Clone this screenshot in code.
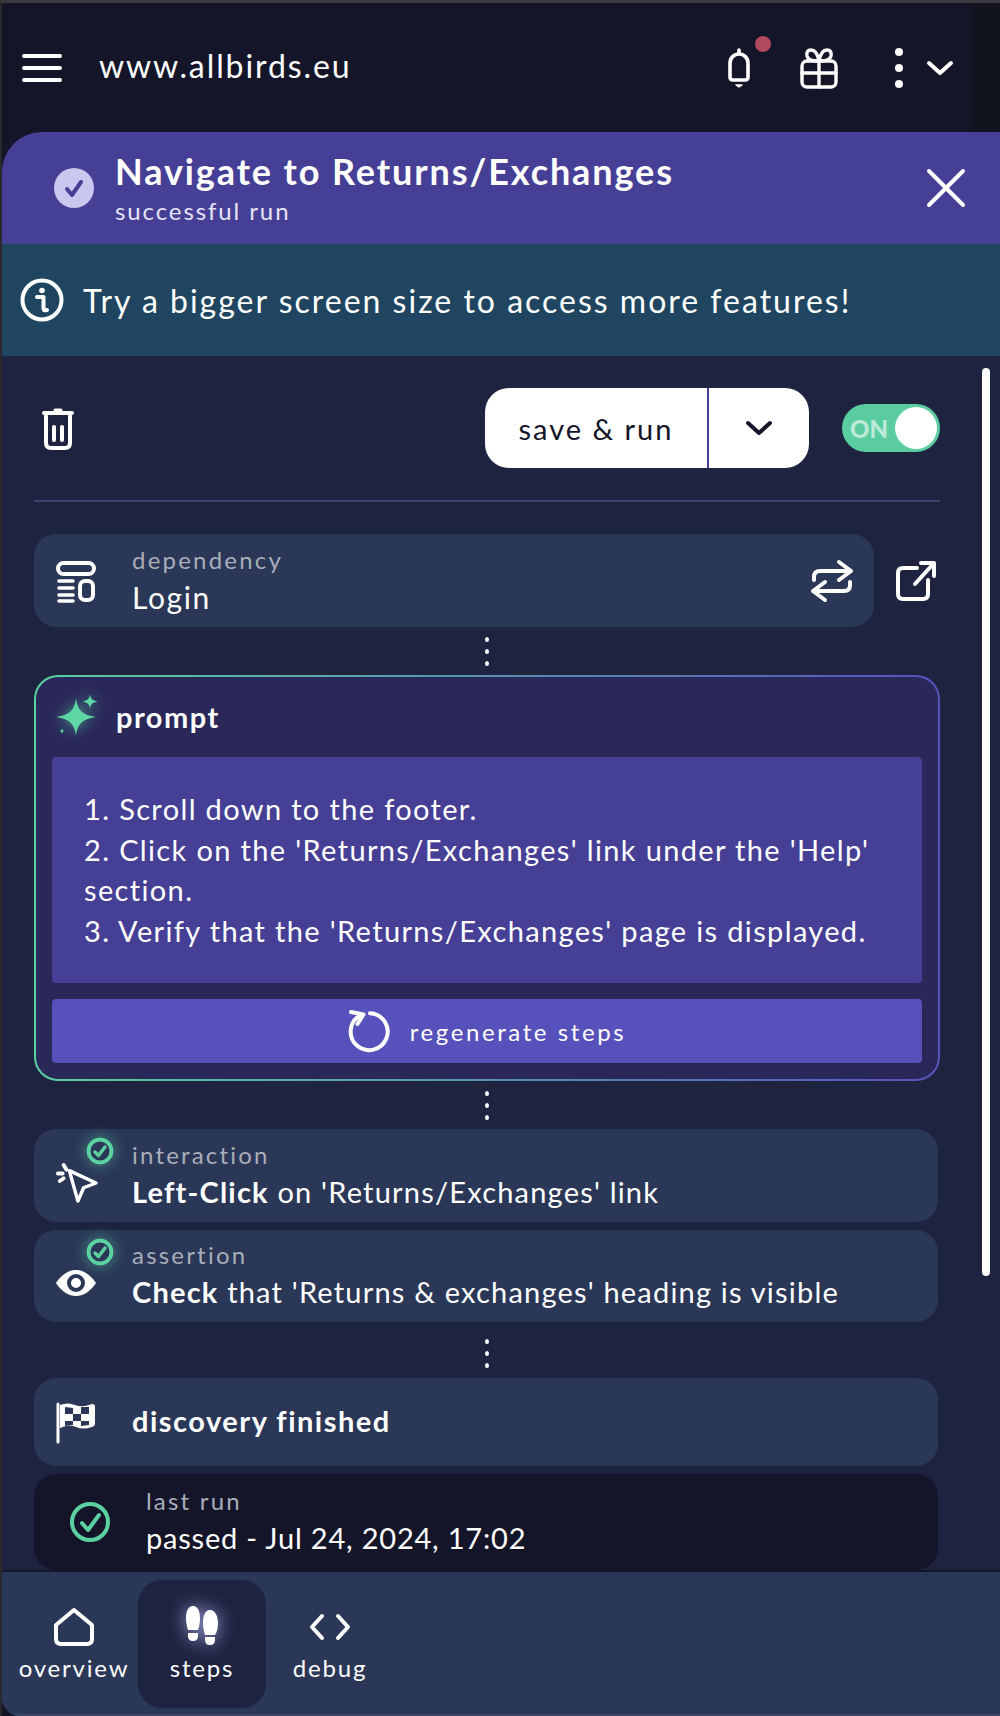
<script>
  const ico = { fill: 'none', stroke: '#fff', 'stroke-width': 4, 'stroke-linecap': 'round', 'stroke-linejoin': 'round' };
</script>

<div class="frame">
  <header class="top">
    <svg class="burger" width="40" height="30" viewBox="0 0 40 30" {...ico}><path d="M2 3h36M2 15h36M2 27h36"/></svg>
    <span class="url">www.allbirds.eu</span>
    <div class="top-icons">
      <div class="bell">
        <svg width="30" height="44" viewBox="0 0 30 44" {...ico} stroke-width="3.6"><path d="M15 4v3M6 31V17a9 9 0 0 1 18 0v14q0 3-3 3H9q-3 0-3-3z"/><path d="M12 39h6l-3 2z" fill="#fff" stroke-width="1.5"/></svg>
        <span class="notif"></span>
      </div>
      <svg class="gift" width="38" height="42" viewBox="0 0 38 42" {...ico} stroke-width="3.4"><path d="M19 14q-2-11-8-11-5 0-4 6 1 5 12 5 11 0 12-5 1-6-4-6-6 0-8 11z"/><rect x="2" y="14" width="34" height="26" rx="5"/><path d="M19 14v26M2 26h34"/></svg>
      <div class="kebab"><i></i><i></i><i></i></div>
      <svg width="26" height="16" viewBox="0 0 26 16" {...ico}><path d="M2 3l11 10L24 3"/></svg>
    </div>
  </header>

  <div class="panel">
    <section class="title">
      <svg width="40" height="40" viewBox="0 0 40 40"><circle cx="20" cy="20" r="20" fill="#c9c7f0"/><path d="M13 21l5 6 9-13" fill="none" stroke="#463f96" stroke-width="4" stroke-linecap="round" stroke-linejoin="round"/></svg>
      <div class="title-text">
        <h1>Navigate to Returns/Exchanges</h1>
        <p>successful run</p>
      </div>
      <svg class="close" width="40" height="38" viewBox="0 0 40 38" {...ico}><path d="M3 2l34 34M37 2L3 36"/></svg>
    </section>

    <section class="info">
      <svg width="44" height="44" viewBox="0 0 44 44"><circle cx="22" cy="22" r="19.5" fill="none" stroke="#fff" stroke-width="4"/><circle cx="22" cy="12.5" r="2.8" fill="#fff"/><path d="M17 19h6.5v11.5q0 2.500 3.500 1.500" fill="none" stroke="#fff" stroke-width="4" stroke-linecap="round" stroke-linejoin="round"/></svg>
      <span>Try a bigger screen size to access more features!</span>
    </section>

    <main class="body">
      <div class="scrollbar"></div>
      <div class="actions">
        <svg width="32" height="42" viewBox="0 0 32 42" {...ico}><path d="M2 5h28"/><path d="M13 2h6" stroke-width="3"/><path d="M4 8v27q0 5 5 5h14q5 0 5-5V8"/><path d="M12 19v13M20 19v13"/></svg>
        <div class="split">
          <span class="save">save &amp; run</span>
          <span class="caret"><svg width="26" height="16" viewBox="0 0 26 16" fill="none" stroke="#141529" stroke-width="4" stroke-linecap="round" stroke-linejoin="round"><path d="M2 3l11 10L24 3"/></svg></span>
        </div>
        <div class="toggle"><b>ON</b><i></i></div>
      </div>
      <hr />

      <div class="dep-row">
        <div class="card dep">
          <svg class="ci" width="40" height="42" viewBox="0 0 40 42" {...ico}><rect x="2" y="3" width="36" height="11" rx="5.500"/><path d="M3 21h14M3 28h14M3 35h14M3 41h14" stroke-width="3.600"/><rect x="24" y="21" width="13" height="19" rx="5"/></svg>
          <div class="ct"><small>dependency</small><span class="login">Login</span></div>
          <svg class="swap" width="42" height="42" viewBox="0 0 42 42" {...ico}><path d="M28 2l12 9-12 9M40 11H9q-6 0-6 6v3M14 22L2 31l12 9M2 31h31q6 0 6-6v-3"/></svg>
        </div>
        <svg class="ext" width="42" height="42" viewBox="0 0 42 42" {...ico}><path d="M22 8H8q-5 0-5 5v21q0 5 5 5h20q5 0 5-5V20M20 24L39 3M26 3h13v13"/></svg>
      </div>

      <div class="dots"><i></i><i></i><i></i></div>

      <section class="prompt">
        <div class="p-head">
          <svg class="spark" width="46" height="46" viewBox="0 0 46 46" fill="#5fd6a6"><path d="M22 4c1.500 12 6 17 20 19-14 2-18.500 7-20 19-1.500-12-6-17-20-19 14-2 18.500-7 20-19z"/><path d="M36 0c.7 5 2.500 6.500 7.500 7.500-5 1-6.800 2.500-7.500 7.500-.7-5-2.500-6.500-7.500-7.500C33.500 6.500 35.300 5 36 0z"/><path d="M8 34c.3 2 1 2.700 3 3-2 .3-2.700 1-3 3-.3-2-1-2.700-3-3 2-.3 2.700-1 3-3z"/></svg>
          <b>prompt</b>
        </div>
        <div class="p-body">1. Scroll down to the footer.<br />2. Click on the 'Returns/Exchanges' link under the 'Help' section.<br />3. Verify that the 'Returns/Exchanges' page is displayed.</div>
        <div class="regen">
          <svg width="42" height="42" viewBox="0 0 42 42" {...ico}><path d="M12 5.600A18.500 18.500 0 1 0 22 3.200"/><path d="M3 2l12.500 2.500L9.500 14"/></svg>
          <span>regenerate steps</span>
        </div>
      </section>

      <div class="dots"><i></i><i></i><i></i></div>

      <div class="card step first">
        <svg class="ci" width="40" height="40" viewBox="0 0 42 42" {...ico}><path d="M16 10l28 13-13 5-6 14z" transform="translate(-2 -2)" stroke-width="3.600"/><path d="M8 2l3 5M2 11h5M4 19l4-3" stroke-width="4"/></svg>
        <div class="ct"><small>interaction</small><span><b>Left-Click</b> on 'Returns/Exchanges' link</span></div>
        <span class="badge"><svg width="28" height="28" viewBox="0 0 28 28"><circle cx="14" cy="14" r="11.500" fill="none" stroke="#5bd0a0" stroke-width="4"/><path d="M9 15l3.500 3.500L19 10" fill="none" stroke="#5bd0a0" stroke-width="3.500" stroke-linecap="round" stroke-linejoin="round"/></svg></span>
      </div>
      <div class="card step second">
        <svg class="ci eye" width="40" height="26" viewBox="0 0 40 26"><path fill-rule="evenodd" fill="#fff" d="M0 13C6 4 13 0 20 0s14 4 20 13c-6 9-13 13-20 13S6 22 0 13zm20-9a9 9 0 1 0 0 18 9 9 0 0 0 0-18zm0 4a5 5 0 1 1 0 10 5 5 0 0 1 0-10z"/></svg>
        <div class="ct"><small>assertion</small><span><b>Check</b> that 'Returns &amp; exchanges' heading is visible</span></div>
        <span class="badge"><svg width="28" height="28" viewBox="0 0 28 28"><circle cx="14" cy="14" r="11.500" fill="none" stroke="#5bd0a0" stroke-width="4"/><path d="M9 15l3.500 3.500L19 10" fill="none" stroke="#5bd0a0" stroke-width="3.500" stroke-linecap="round" stroke-linejoin="round"/></svg></span>
      </div>

      <div class="dots tall"><i></i><i></i><i></i></div>

      <div class="card done">
        <svg class="ci" width="40" height="42" viewBox="0 0 40 42"><path d="M2 2v38" stroke="#fff" stroke-width="3" stroke-linecap="round"/><path fill="#fff" fill-rule="evenodd" d="M4 3q8-3 15 0t17-1q3 0 3 3v17q0 2-3 3-9 3-16 0t-16 1zM9 5v7h8V6zM17 12v7h8v-7zM9 19v5l8-1v-4zM25 5v7h8V5zM25 19v5l8-1v-4z"/></svg>
        <b class="done-t">discovery finished</b>
      </div>

      <div class="card last">
        <svg width="40" height="40" viewBox="0 0 40 40"><circle cx="20" cy="20" r="18" fill="none" stroke="#5bd0a0" stroke-width="4"/><path d="M12 21l6 7 11-15" fill="none" stroke="#5bd0a0" stroke-width="4" stroke-linecap="round" stroke-linejoin="round"/></svg>
        <div class="ct"><small>last run</small><span>passed - Jul 24, 2024, 17:02</span></div>
      </div>
    </main>

    <nav class="nav">
      <div class="tab">
        <svg width="40" height="38" viewBox="0 0 40 38" {...ico}><path d="M20 2L38 17v14q0 5-5 5H7q-5 0-5-5V17z"/></svg>
        <span>overview</span>
      </div>
      <div class="tab active">
        <svg class="feet" width="34" height="40" viewBox="0 0 34 40" fill="#fff"><path d="M8 0c5 0 7 6 7 12 0 5-1 9-2 12H3C2 21 1 17 1 12 1 6 3 0 8 0zM3 27h10v3q0 5-5 5t-5-5zM25 4c5 0 8 6 8 13 0 5-1 9-3 12H20c-1-3-2-7-2-12 0-7 2-13 7-13zM20 31h10v3q0 5-5 5t-5-5z"/></svg>
        <span>steps</span>
      </div>
      <div class="tab">
        <svg class="code" width="42" height="38" viewBox="0 0 42 38" {...ico}><path d="M13 8L3 19l10 11M29 8l10 11-10 11"/></svg>
        <span>debug</span>
      </div>
    </nav>
  </div>
</div>

<style>
  :global(body) { margin: 0; background: #141529; }
  .frame {
    width: 1000px; height: 1716px; box-sizing: border-box; overflow: hidden;
    border-top: 3px solid #3a3a40; border-left: 2px solid #2a2a2e;
    background: #141529; color: #fff;
    font-family: Lato, "Open Sans", sans-serif;
    display: flex; flex-direction: column;
  }
  svg { display: block; flex: none; overflow: visible; }
  .top { height: 129px; flex: none; display: flex; align-items: center; padding-left: 20px; padding-right: 47px; background: linear-gradient(90deg, #141529 968px, #11131f 968px); }
  .url { margin-left: 37px; margin-bottom: 4px; font-size: 32px; letter-spacing: 1.9px; }
  .top-icons { margin-left: auto; display: flex; align-items: center; }
  .bell { position: relative; margin-right: 46px; }
  .notif { position: absolute; width: 16px; height: 16px; border-radius: 50%; background: #b04a5c; left: 31px; top: -10px; }
  .kebab { display: flex; flex-direction: column; gap: 8px; margin: 0 24px 0 57px; }
  .kebab i { width: 8px; height: 8px; border-radius: 50%; background: #fff; }

  .panel { flex: 1; display: flex; flex-direction: column; min-height: 0; border-radius: 40px 0 0 18px; overflow: hidden; }
  .title { height: 112px; flex: none; background: #463f96; display: flex; align-items: center; padding: 0 34px 0 52px; gap: 21px; box-sizing: border-box; }
  .title-text { flex: 1; }
  h1 { margin: 0; font-size: 36px; font-weight: 700; letter-spacing: 1.9px; line-height: 42px; white-space: nowrap; }
  .title p { margin: 4px 0 0; font-size: 24px; letter-spacing: 1.9px; line-height: 30px; color: #e4e3f5; }
  .info { height: 112px; flex: none; background: #1f4560; display: flex; align-items: center; padding-left: 18px; gap: 19px; }
  .info span { font-size: 32px; letter-spacing: 2px; }

  .body { position: relative; flex: 1; min-height: 0; background: #1e2340; padding: 32px 60px 0 32px; box-sizing: border-box; display: flex; flex-direction: column; overflow: hidden; }
  .scrollbar { position: absolute; right: 10px; top: 12px; width: 8px; height: 908px; background: #fff; border-radius: 4px; }
  .actions { display: flex; align-items: center; height: 80px; flex: none; }
  .actions > svg { margin-left: 8px; margin-top: 2px; }
  .split { margin-left: auto; width: 324px; height: 80px; background: #fff; border-radius: 24px; color: #141529; display: flex; align-items: center; }
  .save { width: 224px; border-right: 2px solid #463f96; height: 100%; display: flex; align-items: center; justify-content: center; font-size: 29px; letter-spacing: 2px; box-sizing: border-box; }
  .caret { flex: 1; display: flex; justify-content: center; }
  .toggle { margin-left: 33px; width: 98px; height: 48px; border-radius: 24px; background: #5bcc9f; display: flex; align-items: center; justify-content: space-between; padding: 0 3px 0 8px; box-sizing: border-box; }
  .toggle b { color: rgba(255,255,255,.6); font-size: 24px; font-weight: 900; }
  .toggle i { width: 42px; height: 42px; border-radius: 50%; background: #fff; }
  hr { margin: 32px 0 32px; height: 2px; border: 0; background: #3d4370; flex: none; }

  .dep-row { display: flex; align-items: center; flex: none; }
  .card { background: #2a3757; border-radius: 22px; display: flex; align-items: center; box-sizing: border-box; padding-left: 22px; position: relative; flex: none; }
  .dep { width: 840px; height: 93px; }
  .ct { display: flex; flex-direction: column; margin-left: 36px; padding-bottom: 2px; }
  .ct small { font-size: 24px; letter-spacing: 2.2px; color: #a9aeb9; line-height: 36px; }
  .ct span { font-size: 29px; letter-spacing: 1.2px; line-height: 42px; margin-top: -2px; }
  .ct span.login { font-size: 30px; letter-spacing: 1.6px; }
  .ct b { font-weight: 700; }
  .swap { margin-left: auto; margin-right: 21px; }
  .ext { margin-left: 21px; }

  .dots { height: 48px; flex: none; display: flex; flex-direction: column; align-items: center; justify-content: center; gap: 7px; box-sizing: border-box; }
  .dots.tall { height: 56px; padding-top: 6px; }
  .dots i { width: 4px; height: 5px; border-radius: 50%; background: #fff; }

  .prompt { height: 406px; flex: none; box-sizing: border-box; border: 2px solid transparent; border-radius: 24px; background: linear-gradient(#2a2859, #2a2859) padding-box, linear-gradient(90deg, #5bd0a0, #5652bd) border-box; padding: 0 16px; display: flex; flex-direction: column; }
  .p-head { height: 80px; display: flex; align-items: center; padding-left: 2px; gap: 16px; flex: none; }
  .p-head b { font-size: 29px; font-weight: 700; letter-spacing: 1.5px; margin-top: -2px; }
  .spark { filter: drop-shadow(0 0 7px rgba(95,214,166,.65)); }
  .p-body { height: 226px; flex: none; background: #463f96; border-radius: 4px; padding: 32px 32px 0 32px; box-sizing: border-box; font-size: 29px; line-height: 40.6px; letter-spacing: 1.35px; }
  .regen { margin-top: 16px; height: 64px; flex: none; background: #5751bc; border-radius: 4px; display: flex; align-items: center; justify-content: center; gap: 20px; }
  .regen span { font-size: 24px; letter-spacing: 2.6px; }

  .step { height: 93px; width: 904px; }
  .step.first { margin-bottom: 8px; }
  .step.second { height: 92px; }
  .step .ci { margin-top: 14px; }
  .badge { position: absolute; left: 52px; top: 8px; width: 28px; height: 28px; border-radius: 50%; box-shadow: 0 0 14px rgba(91,208,160,.55); }
  .done { height: 88px; width: 904px; margin-bottom: 8px; align-items: flex-start; padding-top: 24px; }
  .done-t { font-size: 29px; font-weight: 700; letter-spacing: 1.5px; margin-left: 36px; line-height: 38px; }
  .last { height: 96px; width: 904px; background: #141529; padding-left: 36px; }
  .last .ct span { letter-spacing: .8px; }

  .nav { margin-top: 2px; height: 144px; flex: none; background: #2a3757; display: flex; padding-top: 8px; box-sizing: border-box; border-bottom: 2px solid #3a4662; }
  .tab { width: 128px; height: 128px; border-radius: 24px; display: flex; flex-direction: column; align-items: center; justify-content: flex-end; padding-bottom: 26px; box-sizing: border-box; gap: 7px; font-size: 24px; letter-spacing: 1.8px; }
  .tab:first-child { margin-left: 8px; }
  .tab.active { background: #1e2340; }
  .feet { filter: drop-shadow(0 0 9px rgba(190,190,255,.8)); }
</style>
